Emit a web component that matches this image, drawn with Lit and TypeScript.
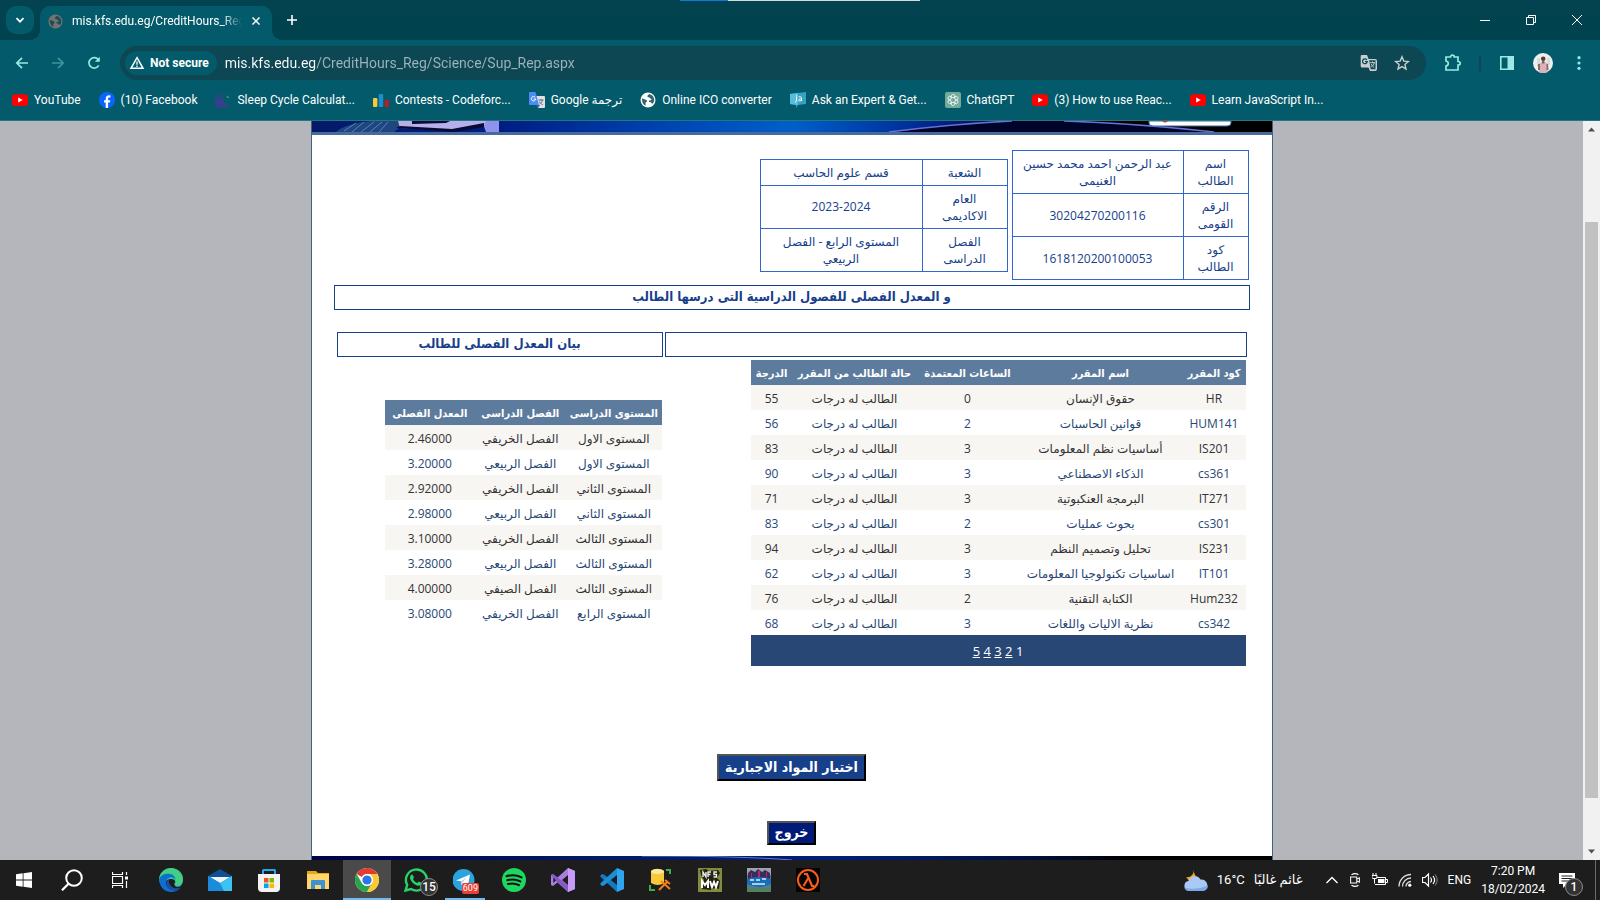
import { LitElement, html, css, svg } from "lit";
import { customElement } from "lit/decorators.js";
import { classMap } from "lit/directives/class-map.js";

const icon = (size: number, box: string, body: unknown) => html`<svg
  width=${size} height=${size} viewBox=${box} fill="none" aria-hidden="true">${body}</svg>`;

const youtube = icon(16, "0 0 16 16", svg`<rect y="2.3" width="16" height="11.6" rx="3" fill="#f00"/><path d="M6.2 5.6v5L10.8 8z" fill="#fff"/>`);
const globe = (size: number, fg: string, bg: string) => icon(size, "0 0 16 16", svg`<circle cx="8" cy="8" r="7.5" fill="${fg}"/><path d="M2 6.5c1.500 0 2.500.8 3.800 1.300 1 .4 1.400 1 1 1.800-.4.700-1.300.900-1.300 2v2.200C3.300 12.700 1.800 10 2 6.500z" fill="${bg}"/><path d="M9.200 2c-.4 1-1.600 1-1.800 2-.1.900.6 1.300 1.500 1.300.8 0 .8 1 1.700 1.200 1 .2 1 1 .6 1.500-.7.700-1.600.1-2.200.8-.4.700.2 1.300 1 1.300 1.300.1 1.500 1.600 2.300 1.700 1.300-1 2.100-2.700 1.900-4.500C13.900 4.600 12 2.500 9.200 2z" fill="${bg}"/>`);
const facebook = icon(16, "0 0 16 16", svg`<circle cx="8" cy="8" r="8" fill="#0866ff"/><path d="M6.700 16v-5.400H5V8.200h1.700V7c0-2.500 1.200-3.700 3.400-3.700l1.300.1v2.100h-.9c-1 0-1.400.4-1.400 1.300v1.400h2.200l-.4 2.400H9.100V16z" fill="#fff"/>`);
const sleep = icon(16, "0 0 16 16", svg`<path d="M0 16V6h2V3l4-2v5h3v10zM10 16v-5h3v5z" fill="#34418a"/><path d="M2 7h1v1H2zM2 10h1v1H2zM6 9h1v1H6zM4 4h1v1H4z" fill="#17547a"/><path d="M12 3c0 1.800 1 2.500 2.500 2.300C13.600 6.300 11 5.500 12 3z" fill="#d5cf8a"/>`);
const codeforces = icon(16, "0 0 16 16", svg`<rect y="6" width="4.400" height="9" rx="1" fill="#f8c83c"/><rect x="5.800" y="2" width="4.400" height="13" rx="1" fill="#1f8fcb"/><rect x="11.600" y="8" width="4.400" height="7" rx="1" fill="#b51e23"/>`);
const translateColor = icon(16, "0 0 16 16", svg`<path d="M7 4h8a1 1 0 0 1 1 1v10a1 1 0 0 1-1 1H9z" fill="#dfe1e5"/><path d="M9.500 8h5M12 7v1M13.500 8c-.5 2-1.800 3.300-3 4M10.500 9.500c.6 1.500 1.800 2.600 3.300 3.200" stroke="#5f6f7f"/><path d="M8 13h3l-2 3z" fill="#3c55c8"/><path d="M1 0h5.500L10 13H1a1 1 0 0 1-1-1V1a1 1 0 0 1 1-1z" fill="#4c8bf5"/><path d="M6.300 5.300A2.200 2.200 0 1 0 6.800 7H4.700" stroke="#fff"/>`);
const expert = icon(16, "0 0 16 16", svg`<path d="M0 2 16 0v12l-8 1-2 3v-3l-6-1z" fill="#35a3c4"/><path d="M0 2 8 1v12l-8-1z" fill="#58bdd8"/><path d="M6.500 4.500v4c0 1-.6 1.500-1.500 1.300M6.500 2.800v.8M8.500 5c2-.8 3-.2 3 1v3M11.500 6.800C8 6.600 8 9 9.500 9c1 0 2-.6 2-1.500" stroke="#fff"/>`);
const gpt = (() => {
  const petals = [0, 60, 120, 180, 240, 300].map(
    (a) => svg`<path transform="rotate(${a} 8 8)" d="M8 5.800 10 4.700c1.800-1 3.600.6 3 2.400L9.800 9" />`);
  return icon(16, "0 0 16 16", svg`<rect width="16" height="16" rx="2" fill="#74aa9c"/><g stroke="#fff" stroke-width=".8">${petals}</g>`);
})();

const bookmarks: [unknown, string][] = [
  [youtube, "YouTube"],
  [facebook, "(10) Facebook"],
  [sleep, "Sleep Cycle Calculat..."],
  [codeforces, "Contests - Codeforc..."],
  [translateColor, "Google ترجمة"],
  [globe(16, "#fff", "#2d6470"), "Online ICO converter"],
  [expert, "Ask an Expert & Get..."],
  [gpt, "ChatGPT"],
  [youtube, "(3) How to use Reac..."],
  [youtube, "Learn JavaScript In..."],
];

@customElement("browser-frame")
export class BrowserFrame extends LitElement {
  static styles = css`
    :host { display: block; background: #035a6b; color: #fff; font: 12px/16px Roboto, "DejaVu Sans", sans-serif; }
    button { all: unset; box-sizing: border-box; display: flex; align-items: center; justify-content: center; }
    svg { display: block; flex: none; }
    .strip { position: relative; display: flex; height: 40px; background: linear-gradient(#034350, #00424e); }
    .progress { position: absolute; top: 0; left: 42.5%; width: 15%; height: 1px; background: linear-gradient(90deg, #0f7ad6 20%, #d5dadb 20%); }
    .search { width: 28px; height: 28px; margin: 6px 6px 0; border-radius: 10px; background: #035a6b; }
    .tab { position: relative; display: flex; align-items: center; width: 232px; margin-top: 6px; padding: 0 12px 4px 8px; box-sizing: border-box; border-radius: 10px 10px 0 0; background: #035a6b; }
    .tab::before, .tab::after { content: ""; position: absolute; bottom: 0; width: 10px; height: 10px; }
    .tab::before { left: -10px; background: radial-gradient(circle at 0 0, transparent 10px, #035a6b 10px); }
    .tab::after { right: -10px; background: radial-gradient(circle at 100% 0, transparent 10px, #035a6b 10px); }
    .title { flex: 1; min-width: 0; margin: 0 10px 0 9px; overflow: hidden; white-space: nowrap; mask-image: linear-gradient(90deg, #000 88%, transparent); }
    .new { width: 28px; margin-left: 6px; }
    .window { display: flex; margin-left: auto; }
    .window button { width: 46px; }
    .bar { display: flex; align-items: center; height: 46px; padding: 0 3px 0 14px; color: #9be8e4; }
    .bar > button { width: 36px; height: 36px; }
    .bar > .back, .bar > .fwd, .bar > .reload { width: 16px; margin-right: 20px; }
    .bar > .reload { margin-right: 18px; }
    .fwd { opacity: .4; }
    .omni { flex: 1; display: flex; align-items: center; height: 34px; margin-right: 9px; border-radius: 17px; padding: 0 16px 0 5px; background: #0e4754; color: #c9cfd0; }
    .chip { height: 24px; padding: 0 8px 0 4px; border-radius: 12px; background: #035a6b; color: #fff; font-weight: 700; gap: 5px; }
    .url { flex: 1; min-width: 0; margin-left: 8px; padding: 0; border: 0; font: 14px/20px Roboto, sans-serif; color: transparent; background: linear-gradient(90deg, #fff 90px, #9db5bb 90px); -webkit-background-clip: text; background-clip: text; }
    .omni button + button { margin-left: 16px; }
    .rule { width: 2px; height: 16px; margin: 0 8px; background: #0e4754; }
    .marks { display: flex; align-items: center; box-sizing: border-box; height: 35px; padding: 0 0 6px 12px; border-bottom: 1px solid #24767f; gap: 18px; white-space: nowrap; }
    .marks a { display: flex; align-items: center; gap: 6px; color: inherit; text-decoration: none; }
  `;

  render() {
    return html`
      <div class="strip">
        <div class="progress"></div>
        <button class="search" aria-label="Search tabs">${icon(12, "0 0 12 12", svg`<path d="m2.500 4.200 3.500 3.500 3.500-3.500" stroke="#fff" stroke-width="1.700"/>`)}</button>
        <div class="tab">
          ${globe(15, "#74716f", "#164f5b")}
          <span class="title">mis.kfs.edu.eg/CreditHours_Reg</span>
          <button aria-label="Close tab">${icon(8, "0 0 8 8", svg`<path d="m.5.5 7 7m0-7-7 7" stroke="#fff" stroke-width="1.500"/>`)}</button>
        </div>
        <button class="new" aria-label="New tab">${icon(12, "0 0 12 12", svg`<path d="M6 1v10M1 6h10" stroke="#fff" stroke-width="1.600"/>`)}</button>
        <div class="window">
          <button aria-label="Minimize">${icon(10, "0 0 10 10", svg`<path d="M0 5.500h10" stroke="#fff"/>`)}</button>
          <button aria-label="Restore">${icon(10, "0 0 10 10", svg`<path d="M.5 2.500h7v7h-7zM2.500 2.500v-2h7v7h-2" stroke="#fff"/>`)}</button>
          <button aria-label="Close">${icon(10, "0 0 10 10", svg`<path d="m0 0 10 10m0-10L0 10" stroke="#fff"/>`)}</button>
        </div>
      </div>
      <div class="bar">
        <button class="back" aria-label="Back">${icon(16, "0 0 16 16", svg`<path d="M14 8H3m5-5.200L2.800 8 8 13.200" stroke="currentColor" stroke-width="1.700"/>`)}</button>
        <button class="fwd" aria-label="Forward">${icon(16, "0 0 16 16", svg`<path d="M2 8h11M8 2.800 13.200 8 8 13.200" stroke="currentColor" stroke-width="1.700"/>`)}</button>
        <button class="reload" aria-label="Reload">${icon(16, "0 0 16 16", svg`<path d="M12.700 10.400A5.200 5.200 0 1 1 12.500 5" stroke="currentColor" stroke-width="1.700"/><path d="M13.800 1.800v5H8.900z" fill="currentColor"/>`)}</button>
        <div class="omni">
          <button class="chip">${icon(16, "0 0 16 16", svg`<path d="M8 2.700 14 13.300H2z" stroke="#fff" stroke-width="1.500"/><path d="M8 6.500v3.200M8 10.600v1.300" stroke="#fff" stroke-width="1.300"/>`)}Not secure</button>
          <input class="url" aria-label="Address" .value=${"mis.kfs.edu.eg/CreditHours_Reg/Science/Sup_Rep.aspx"} />
          <button aria-label="Translate">${icon(18, "0 0 18 18", svg`<path d="M2 1h5l1.600 4H15a2 2 0 0 1 2 2v8a2 2 0 0 1-2 2H10l-1.500-3.500H2a1.300 1.300 0 0 1-1.300-1.300V2.300A1.300 1.300 0 0 1 2 1z" fill="#c9cfd0"/><path d="M9.200 6.300h6.300v9h-4.800z" fill="#0e4754"/><path d="M10 8.700h5M12.500 7.500v1.200M14.300 8.700c-.4 2-1.500 3.500-3 4.200M11.300 10c.6 1.700 1.500 2.700 3 3.600" stroke="#c9cfd0"/><path d="M6.900 5.900A2.400 2.400 0 1 0 7.300 7.700H5" stroke="#0e4754" stroke-width="1.200"/>`)}</button>
          <button aria-label="Bookmark">${icon(16, "0 0 16 16", svg`<path d="m8 1.800 1.800 4.300 4.600.4-3.500 3 1.100 4.500L8 11.600 4 14l1.100-4.500-3.500-3 4.600-.4z" stroke="#c9cfd0" stroke-width="1.400"/>`)}</button>
        </div>
        <button aria-label="Extensions">${icon(18, "0 0 18 18", svg`<path d="M2 3h4.500C6.500.500 10.300.500 10.300 3H14v4.500c3 0 3 3.500 0 3.500v5H2v-4c3-.5 3-4.500 0-5z" stroke="currentColor" stroke-width="1.700"/>`)}</button>
        <div class="rule"></div>
        <button aria-label="Side panel">${icon(16, "0 0 16 16", svg`<path d="M1.800 1.800h12.400v12.400H1.800z" stroke="currentColor" stroke-width="1.600"/><path d="M8.500 1.500H14.500v13h-6z" fill="currentColor"/>`)}</button>
        <button aria-label="Profile">${icon(20, "0 0 20 20", svg`<circle cx="10" cy="10" r="10" fill="#f0eff0"/><path d="M4 5h3v8H4zM14 5h3v7h-3z" fill="#cfe0d8"/><path d="M6 19.200V11l2.500-2h3.500l3 2v8A10 10 0 0 1 6 19.200z" fill="#d9b3bb"/><path d="m5 11 2 0v6H5zM13.500 11H15l.5 6h-2z" fill="#93645a"/><circle cx="10.200" cy="5.800" r="2.300" fill="#5b3d38"/><path d="M9 8h2.400v2.500H9z" fill="#8a5c50"/>`)}</button>
        <button aria-label="Menu">${icon(16, "0 0 16 16", svg`<g fill="currentColor"><circle cx="8" cy="2.700" r="1.600"/><circle cx="8" cy="8" r="1.600"/><circle cx="8" cy="13.300" r="1.600"/></g>`)}</button>
      </div>
      <nav class="marks">
        ${bookmarks.map(([i, t]) => html`<a href="#">${i}<span>${t}</span></a>`)}
      </nav>
    `;
  }
}

const status = "الطالب له درجات";
const courses: [string, string, number, number][] = [
  ["HR", "حقوق الإنسان", 0, 55],
  ["HUM141", "قوانين الحاسبات", 2, 56],
  ["IS201", "أساسيات نظم المعلومات", 3, 83],
  ["cs361", "الذكاء الاصطناعي", 3, 90],
  ["IT271", "البرمجة العنكبوتية", 3, 71],
  ["cs301", "بحوث عمليات", 2, 83],
  ["IS231", "تحليل وتصميم النظم", 3, 94],
  ["IT101", "اساسيات تكنولوجيا المعلومات", 3, 62],
  ["Hum232", "الكتابة التقنية", 2, 76],
  ["cs342", "نظرية الاليات واللغات", 3, 68],
];
const terms: [string, string, string][] = [
  ["المستوى الاول", "الفصل الخريفي", "2.46000"],
  ["المستوى الاول", "الفصل الربيعي", "3.20000"],
  ["المستوى الثاني", "الفصل الخريفي", "2.92000"],
  ["المستوى الثاني", "الفصل الربيعي", "2.98000"],
  ["المستوى الثالث", "الفصل الخريفي", "3.10000"],
  ["المستوى الثالث", "الفصل الربيعي", "3.28000"],
  ["المستوى الثالث", "الفصل الصيفي", "4.00000"],
  ["المستوى الرابع", "الفصل الخريفي", "3.08000"],
];

@customElement("student-report")
export class StudentReport extends LitElement {
  static styles = css`
    :host { display: flex; min-height: 0; overflow: hidden; background: #b4b6bb; font: 12px/17px "Open Sans", "DejaVu Sans", sans-serif; }
    .view { flex: 1; overflow: hidden; }
    .sheet { max-width: 960px; margin: 0 auto; border: solid #44617f; border-width: 0 1px; background: #fff; }
    .art { display: block; width: 100%; }
    .top { height: 11px; border-bottom: 3px solid #476a9f; }
    .body { display: flex; flex-direction: column; padding: 0 22px; color: #17408b; }
    table { border-collapse: collapse; table-layout: fixed; text-align: center; }
    th, td { padding: 0; }
    .info { display: flex; align-items: center; gap: 4px; margin-top: 15px; padding: 0 1px; }
    .info table { border: 1px solid #36c; margin: 0; }
    .info th, .info td { border: 1px solid #36c; padding: 4px 5px; font-weight: 400; }
    .student { width: 237px; }
    .study { width: 248px; }
    .student th { width: 54px; }
    .study th { width: 74px; }
    h1, h2 { margin: 0; border: 1px solid #17408b; box-sizing: border-box; height: 25px; text-align: center; font: 700 13px/21px "DejaVu Sans Condensed", "DejaVu Sans", sans-serif; }
    h1 { margin-top: 5px; }
    .grid { display: grid; grid-template-columns: 583fr 327fr; gap: 0 2px; margin: 22px 3px 0; align-items: start; }
    .list { font-size: 12px; line-height: 23px; color: #284775; white-space: nowrap; }
    .list th, .list td { height: 23px; padding-top: 2px; }
    .list th { background: #5d7b9d; color: #fff; font: 700 11px/23px "DejaVu Sans Condensed", "DejaVu Sans", sans-serif; }
    .list .odd { background: #f7f6f3; color: #333; }
    .courses { width: 495px; margin: 3px 1px 0; }
    .gpa { width: 277px; margin: 43px 1px 0; }
    .c1 { width: 63px; } .c2 { width: 164px; } .c3 { width: 102px; } .c4 { width: 124px; } .c5 { width: 42px; }
    .g1 { width: 96px; } .g2 { width: 91px; } .g3 { width: 90px; }
    .list .pager { height: 29px; background: #284775; color: #fff; font-size: 13px; }
    .pager a { color: #fff; }
    .actions { display: flex; flex-direction: column; align-items: center; gap: 40px; margin: 88px 0 11px; }
    .actions button { padding: 0 6px 2px; border: 2px solid; border-color: #545454 #000 #000 #545454; color: #fff; font: 700 14px/18px "DejaVu Sans Condensed", "DejaVu Sans", sans-serif; }
    .pick { height: 27px; background: #17408b; }
    .exit { height: 24px; background: #001a78; }
    .scroll { display: flex; flex-direction: column; align-items: center; width: 17px; background: #f1f1f1; }
    .scroll svg { display: block; flex: none; margin: 5px 0; }
    .gap { flex: 84; }
    .thumb { flex: 576; width: 13px; background: #c1c1c1; }
    .rest { flex: 45; }
  `;

  private banner() {
    return html`<svg class="art top" viewBox="0 0 960 11" preserveAspectRatio="none" aria-hidden="true">
      <defs>
        <linearGradient id="sky"><stop stop-color="#051a66"/><stop offset=".1" stop-color="#001c7c"/><stop offset=".2" stop-color="#001e82"/><stop offset=".35" stop-color="#0040ac"/><stop offset=".5" stop-color="#0060c8"/><stop offset=".62" stop-color="#00309a"/><stop offset=".72" stop-color="#000858"/><stop offset=".82" stop-color="#000"/></linearGradient>
      </defs>
      <rect width="960" height="11" fill="url(#sky)"/>
      <path d="M24 11C30 5 45 1 60 0H96L82 11z" fill="#20467f"/>
      <path d="m32 10 12-8m-4 9L52 1m-3 10L62 1m-4 10L70 1m-3 10 9-10" stroke="#4f86bf" fill="none"/>
      <path d="M170 0h17v11h-13z" fill="#8f93ee"/>
      <path d="M86 0h88l-2 5-30 5-54-3z" fill="#b5b0ec"/>
      <path d="M88 5 140 8l32-6v4l-30 5-58-4zM100 0h38l-4 2-34 1z" fill="#0a0a33"/>
      <path d="M580 11C630 4 670 1 710 0h50c60 2 100 6 145 11z" fill="#00042a"/>
      <path d="M577 11C625 5 660 2 700 0M752 0c65 2 105 6 150 11" stroke="#6a72d8" stroke-width="1.500" fill="none"/>
      <path d="M837 0h82v2q0 3-4 3h-74q-4 0-4-3z" fill="#fff" stroke="#386aa8"/>
      <path d="M850 0q3 3 6 0" fill="#d33"/>
    </svg>`;
  }

  render() {
    return html`
      <div class="view">
        <div class="sheet">
          ${this.banner()}
          <div class="body" dir="rtl" lang="ar">
            <div class="info">
              <table class="student">
                <tr><th scope="row">اسم الطالب</th><td>عبد الرحمن احمد محمد حسين الغنيمى</td></tr>
                <tr><th scope="row">الرقم القومى</th><td>30204270200116</td></tr>
                <tr><th scope="row">كود الطالب</th><td>1618120200100053</td></tr>
              </table>
              <table class="study">
                <tr><th scope="row">الشعبة</th><td>قسم علوم الحاسب</td></tr>
                <tr><th scope="row">العام<br />الاكاديمى</th><td><bdi>2023-2024</bdi></td></tr>
                <tr><th scope="row">الفصل<br />الدراسى</th><td>المستوى الرابع - الفصل الربيعي</td></tr>
              </table>
            </div>
            <h1>و المعدل الفصلى للفصول الدراسية التى درسها الطالب</h1>
            <div class="grid">
              <h2></h2>
              <h2>بيان المعدل الفصلى للطالب</h2>
              <table class="list courses">
                <thead><tr>
                  <th class="c1">كود المقرر</th><th class="c2">اسم المقرر</th><th class="c3">الساعات المعتمدة</th>
                  <th class="c4">حالة الطالب من المقرر</th><th class="c5">الدرجة</th>
                </tr></thead>
                <tbody>
                  ${courses.map(([code, name, hours, grade], i) => html`<tr class=${classMap({ odd: i % 2 === 0 })}>
                    <td>${code}</td><td>${name}</td><td>${hours}</td><td>${status}</td><td>${grade}</td></tr>`)}
                </tbody>
                <tfoot><tr><td class="pager" colspan="5">1 ${[2, 3, 4, 5].map((n) => html`<a href="#">${n}</a> `)}</td></tr></tfoot>
              </table>
              <table class="list gpa">
                <thead><tr><th class="g1">المستوى الدراسى</th><th class="g2">الفصل الدراسى</th><th class="g3">المعدل الفصلى</th></tr></thead>
                <tbody>
                  ${terms.map((row, i) => html`<tr class=${classMap({ odd: i % 2 === 0 })}>${row.map((c) => html`<td>${c}</td>`)}</tr>`)}
                </tbody>
              </table>
            </div>
            <div class="actions">
              <button class="pick">اختيار المواد الاجبارية</button>
              <button class="exit">خروج</button>
            </div>
          </div>
          <svg class="art" height="40" viewBox="0 0 960 40" preserveAspectRatio="none" aria-hidden="true">
            <defs><linearGradient id="foot"><stop stop-color="#000048"/><stop offset=".3" stop-color="#001a66"/><stop offset=".55" stop-color="#001e78"/><stop offset=".75" stop-color="#00103c"/><stop offset=".85" stop-color="#000"/></linearGradient></defs>
            <rect width="960" height="40" fill="url(#foot)"/>
            <path d="M330 0q100 0 150 4" stroke="#6b76cc" fill="none"/>
          </svg>
        </div>
      </div>
      <div class="scroll">
        ${icon(7, "0 0 7 4", svg`<path d="M0 4 3.500 0 7 4z" fill="#505050"/>`)}
        <div class="gap"></div><div class="thumb"></div><div class="rest"></div>
        ${icon(7, "0 0 7 4", svg`<path d="M0 0h7L3.500 4z" fill="#505050"/>`)}
      </div>
    `;
  }
}

const apps: [string, string, unknown][] = [
  ["Edge", "", svg`<path d="M24 12a8 8 0 0 1-2 5.500c-2 2-6 1.500-6.500-.8 1.800-1.500 1.300-5.700-3.500-5.700-5 0-7 4-7 7C1 15 0 13 0 11 1 4 6 0 12 0s12 5 12 12z" fill="#35c1b1"/><path d="M24 10c0-6-6-10-12-10C6 0 1 4 0 11c2-4 6-6 10-5.500 4 .5 6.500 3 6.500 6.500 0 1.500-.5 2.500-1.500 3.500 0 2 6 2.500 8-.500.7-1.300 1-3 1-5z" fill="#4ad66d" opacity=".65"/><path d="M0 11c2-4.500 7-6 11-5 3.500.8 5.500 3 5.500 6-1-2-3-3-5.500-2.500C6.500 10.500 6 16 9 19.500c3 3 8 3.500 11.500 1.500C15 26 1 26 0 11z" fill="#0c6fce"/><path d="M9 19.500C6.500 16 7.500 12.500 10 11c-1 4 1.500 8 5.500 9 2.500.7 5 .3 6.500-.5-3.500 4-9.500 4-13 0z" fill="#1a4fa8"/>`],
  ["Mail", "", svg`<path d="M0 8 12 1l12 7v4H0z" fill="#0f4f96"/><path d="M2 9h20L12 16z" fill="#f2f2f2"/><path d="M0 8v15h24V8L12 15z" fill="#1e9de4"/><path d="M24 8v15H0z" fill="#3cc3f2"/><path d="M0 8v15h16L12 15z" fill="#1b8bdc"/>`],
  ["Store", "", svg`<path d="M6 6V2.500Q6 2 6.500 2h11q.5 0 .5.500V6" stroke="#28a8ea" stroke-width="2"/><path d="M1 6h22v14q0 4-4 4H5q-4 0-4-4z" fill="#f3f3f3"/><path d="M7 10h4.500v4.500H7z" fill="#f25022"/><path d="M12.500 10H17v4.500h-4.500z" fill="#7fba00"/><path d="M7 15.500h4.500V20H7z" fill="#00a4ef"/><path d="M12.500 15.500H17V20h-4.500z" fill="#ffb900"/>`],
  ["File Explorer", "", svg`<path d="M1 3h9l2 2h11v16H1z" fill="#e7a51c"/><path d="M1 6h22v15H1z" fill="#ffd667"/><path d="M5 21v-8q0-1 1-1h12q1 0 1 1v8h-4v-4H9v4z" fill="#3f91d4"/>`],
  ["Chrome", "active", svg`<circle cx="12" cy="12" r="12" fill="#fff"/><path d="M12 0c4.400 0 8.300 2.400 10.400 6H12a6 6 0 0 0-5.200 3L1.600 6A12 12 0 0 1 12 0z" fill="#e33b2e"/><path d="M1.600 6A12 12 0 0 0 12 24l5.200-9A6 6 0 0 1 6.800 15z" fill="#2ba24c"/><path d="M22.400 6A12 12 0 0 1 12 24l5.200-9a6 6 0 0 0 0-6L15 6z" fill="#fcc934"/><circle cx="12" cy="12" r="5.800" fill="#fff"/><circle cx="12" cy="12" r="4.600" fill="#2f74e8"/>`],
  ["WhatsApp", "", svg`<path d="M1.500 22.500 3.200 17A10.500 10.500 0 1 1 7 21z" stroke="#25d366" stroke-width="2.400"/><path d="M8.500 6.500 10 9.500 9 11c1 2 2.300 3.200 4.300 4l1.500-1.500 3 1.500c0 2-1.800 3.200-4 2.700C10 17 6.500 13 6 10c0-1.800 1-3.500 2.500-3.500z" fill="#25d366"/>`],
  ["Telegram", "open", svg`<circle cx="10.500" cy="12" r="11" fill="#2ba3dc"/><path d="M3 12.500 17 6.500l-2.300 12-4.200-3.300-2 2-.5-4z" fill="#fff"/><path d="m8 13.200 6-4.200-4.500 5.500-1 2.700z" fill="#b8d5e8"/>`],
  ["Spotify", "", svg`<circle cx="12" cy="12" r="12" fill="#1ed760"/><path d="M4.500 8.200c5-1.600 11-1 15 1.200M5.300 12.200c4.500-1.300 9.300-.8 13 1.200M6 16c3.800-1 7.800-.6 11 1.100" stroke="#111" stroke-width="2" stroke-linecap="round"/>`],
  ["Visual Studio", "", svg`<path d="m17 0 7 3v18l-7 3L6.500 14.500 2 18l-2-1V7l2-1 4.500 3.500zM17 7l-6 5 6 5zM2.300 9v6l3-3z" fill="#a87ee0" fill-rule="evenodd"/><path d="m2 6 4.500 3.500L17 17v7L6.500 14.500 0 7z" fill="#7a4fbf" opacity=".75"/><path d="m17 0 7 3v18l-7 3z" fill="#c79bf7"/>`],
  ["VS Code", "", svg`<path d="m17 24-16-14.800L0 8l2-2 2 .5L17 17z" fill="#0f7bc4"/><path d="M17 0v7L4 17.500 2 18l-2-2L1 14.800z" fill="#1c8ed8"/><path d="m17 0 7 3v18l-7 3z" fill="#30a4ee"/>`],
  ["SQL Tools", "", svg`<path d="M2 3q6-4.500 13 0v12q-6 4-13 0z" fill="#f7c83a"/><ellipse cx="8.500" cy="3.500" rx="6.500" ry="2.500" fill="#fce89a"/><path d="M17 2h4v4M1 17v5h5" stroke="#3fae49" stroke-width="2"/><path d="m10 22 9-9M12 13l9 8M16 12l5 4" stroke="#f07f1c" stroke-width="2"/>`],
  ["NFS", "", svg`<path d="M0 0h24v24H0z" fill="#858b3c"/><path d="M2 2 8 1l3 2 9-1 2 3-3 5 3 3-1 8-4-1-4 2-9-1 2-9-3-5z" fill="#20230f"/><path d="M5 9V4l3 5V4M10 9V4h3m-3 2.500h2.500M19 4h-3v2.500h2.500V9h-3" stroke="#eee" stroke-width="1.400"/><path d="M4 20v-7l3 4 3-4v7M12 13l2 6 2-5 2 5 2-6" stroke="#fff" stroke-width="2"/>`],
  ["PES", "", svg`<path d="M0 0h24v24H0z" fill="#5b7890"/><path d="M0 0h24v7H0z" fill="#9aa4ad"/><path d="M1 5l3-3 4 2 3-3 4 3 3-2 5 3v8H1z" fill="#3a2c63"/><path d="M4 5h1v6H4zM11 3h2v7h-2zM19 4h1v7h-1z" fill="#b2304a"/><path d="M0 11q12-4 24 0v5q-12 6-24 0z" fill="#1670b8"/><path d="M3 12h4m2 0h4m2-1h4M5 16h13" stroke="#d9eefa" stroke-width="1.400"/><path d="M0 20h24v4H0z" fill="#4f8360"/>`],
  ["Half-Life", "", svg`<path d="M0 0h24v24H0z" fill="#050505"/><circle cx="12" cy="12" r="10" stroke="#fb5b1b" stroke-width="2"/><path d="M8 6h3l5 12h2.500M12 10.500 7.500 18" stroke="#fb5b1b" stroke-width="2.200"/>`],
];

@customElement("task-bar")
export class TaskBar extends LitElement {
  static styles = css`
    :host { display: flex; height: 40px; background: #1d1d1d; color: #fff; font: 12px/16px Roboto, "DejaVu Sans", sans-serif; }
    button { all: unset; position: relative; box-sizing: border-box; display: flex; align-items: center; justify-content: center; }
    svg { display: block; flex: none; }
    .sys button { width: 48px; }
    .sys, .apps { display: flex; }
    .apps { gap: 1px; margin-left: 3px; }
    .apps button { width: 48px; }
    .active { background: #4a4a4a; }
    .active::after, .open::after { content: ""; position: absolute; bottom: 0; left: 0; right: 0; height: 2px; background: #76b9ed; }
    .open::after { left: 4px; right: 4px; }
    .count { position: absolute; right: 2px; bottom: 4px; width: 18px; height: 18px; box-sizing: border-box; border: 1px solid #8a8a8a; border-radius: 50%; background: #333; font-weight: 500; line-height: 16px; text-align: center; }
    .red { position: absolute; right: 10px; bottom: 6px; padding: 0 1px; border-radius: 2px; background: #ee3f37; font-size: 9px; line-height: 11px; }
    .tray { display: flex; align-items: center; gap: 10px; margin-left: auto; }
    .weather { gap: 9px; padding-right: 13px; font-size: 13px; }
    .clock { text-align: center; line-height: 18px; }
    .notes { width: 30px; height: 40px; padding-left: 4px; justify-content: flex-start; }
    .edge { width: 1px; height: 40px; margin-right: 4px; background: #6b6b6b; }
  `;

  render() {
    return html`
      <div class="sys">
        <button aria-label="Start">${icon(16, "0 0 16 16", svg`<path d="M0 2.300 6.700 1.300v6.300H0zM7.500 1.200 16 0v7.600H7.500zM0 8.400h6.700v6.300L0 13.700zM7.500 8.400H16V16l-8.500-1.200z" fill="#fff"/>`)}</button>
        <button aria-label="Search">${icon(22, "0 0 22 22", svg`<circle cx="13" cy="9" r="7.800" stroke="#fff" stroke-width="2"/><path d="M7.500 14.700 1 21.300" stroke="#fff" stroke-width="2.200"/>`)}</button>
        <button aria-label="Task view">${icon(16, "0 0 16 16", svg`<path d="M.5 0v2.500h10V0M.5 16v-2.500h10V16M.5 4.500h10v7H.5zM14.500 0v3M14.500 9v7" stroke="#fff" stroke-width="1.200"/><path d="M13 4.500h3v3h-3z" fill="#fff"/>`)}</button>
      </div>
      <div class="apps">
        ${apps.map(([name, state, art]) => html`<button class=${state} aria-label=${name}>
          ${icon(24, "0 0 24 24", art)}
          ${name === "WhatsApp" ? html`<span class="count">15</span>` : ""}
          ${name === "Telegram" ? html`<span class="red">609</span>` : ""}
        </button>`)}
      </div>
      <div class="tray">
        <button class="weather">
          ${icon(24, "0 0 24 24", svg`<path d="M10 1c-.5 5 1.500 8 5.500 9L12 14H6L2 9c4 1 8-2 8-8z" fill="#f5a623"/><path d="M5 23a5 5 0 0 1-.5-9.900 6.500 6.500 0 0 1 12-1.600A5.800 5.800 0 0 1 18.500 23z" fill="#a9c9f7"/><path d="M5 23a5 5 0 0 1-4.600-3.500Q12 23 24 17.500A5.500 5.500 0 0 1 18.500 23z" fill="#7fa8ea"/>`)}
          <span>16°C</span><span lang="ar" dir="rtl">غائم غالبًا</span>
        </button>
        ${icon(12, "0 0 12 12", svg`<path d="m.5 9 5.500-5.500L11.500 9" stroke="#fff" stroke-width="1.400"/>`)}
        ${icon(14, "1 0 14 16", svg`<path d="M3 4.500h7v7H3zM10 7l3-1.500v5L10 9M4 2q4-2.500 8 0M4 14q4 2.500 8 0" stroke="#fff" stroke-width="1.200"/>`)}
        ${icon(16, "0 0 16 16", svg`<path d="M4.500 5.500h9v7H3M14 7.500h1.500v3H14M1 1v2M4 1v2M0 3.500h5v2q0 1-1 1H1q-1 0-1-1zM2.500 6.500v5" stroke="#fff"/><path d="M6 7h6.500v4H6z" fill="#fff"/>`)}
        ${icon(14, "0 0 14 14", svg`<path d="M1 13.500A12 12 0 0 1 13 1.500M4.500 13.500A8.500 8.500 0 0 1 13 5M8 13.500a5 5 0 0 1 5-5" stroke="#ddd" stroke-width="1.300"/><circle cx="11.800" cy="12.200" r="1.600" fill="#fff"/>`)}
        ${icon(16, "0 0 16 16", svg`<path d="M.500 5.500h2.500l3.500-3.500v12L3 10.500H.5zM8.500 5.500q2 2.500 0 5M11 4q3.200 4 0 8" stroke="#fff" stroke-width="1.200"/><path d="M13.200 2.500q4 5.500 0 11" stroke="#888"/>`)}
        <span>ENG</span>
        <div class="clock">7:20 PM<br />18/02/2024</div>
        <button class="notes" aria-label="Notifications">
          ${icon(16, "0 0 16 16", svg`<path d="M0 1h16v11H8l-4 4v-4H0z" fill="#fff"/><path d="M2.500 4h11M2.500 6.500h11M2.500 9h8" stroke="#1d1d1d"/>`)}
          <span class="count">1</span>
        </button>
        <div class="edge"></div>
      </div>
    `;
  }
}

@customElement("app-root")
export class AppRoot extends LitElement {
  static styles = css`
    :host { display: grid; grid-template-rows: auto minmax(0, 1fr) auto; height: 100vh; overflow: hidden; }
  `;
  render() {
    return html`<browser-frame></browser-frame><student-report></student-report><task-bar></task-bar>`;
  }
}
